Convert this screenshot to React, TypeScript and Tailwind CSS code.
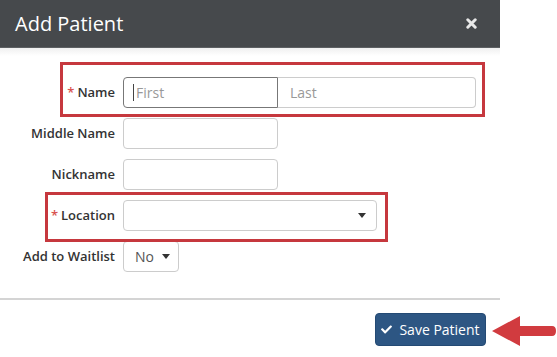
import { FaCheck } from 'react-icons/fa';

const labelCls = 'text-right text-[13px] font-semibold text-[#333] leading-[31px] whitespace-nowrap';
const inputBase =
  'h-[31px] rounded-[4px] border bg-white px-3 text-[14px] text-[#555] placeholder:text-[#999] focus:outline-none';
const inputCls = `${inputBase} border-[#ccc]`;

function Caret() {
  return (
    <svg width="8" height="5" viewBox="0 0 8 5" className="fill-[#333]">
      <path d="M0 0h8L4 5z" />
    </svg>
  );
}

export default function App() {
  return (
    <div className="relative w-[557px] h-[357px] bg-white overflow-hidden" style={{ fontFamily: '"Open Sans", "Liberation Sans", sans-serif' }}>
      <div className="w-[500px] h-full flex flex-col">
        <div className="h-[48px] shrink-0 bg-[#46494c] border-b border-[#5d6063] flex items-center justify-between pl-[15px] pr-[23px]">
          <h2 className="text-[20px] text-white leading-none">Add Patient</h2>
          <svg width="11" height="11" viewBox="0 0 11 11" className="stroke-[#e8e8e8]">
            <path d="M1.8 1.8L9.2 9.2M9.2 1.8L1.8 9.2" strokeWidth="3" strokeLinecap="round" />
          </svg>
        </div>
        <div className="h-[8px] bg-gradient-to-b from-[#f0f0f0] to-white" />
        <div className="grid grid-cols-[115px_auto] gap-x-[8px] gap-y-[10px] pt-[21px] pb-[26px] items-center">
          <label className={labelCls}>
            <span className="text-[#d9534f] mr-[3px]">*</span>Name
          </label>
          <div className="flex w-[353px]">
            <div className={`${inputBase} border-[#777] w-[155px] rounded-r-none flex items-center pl-[9px]`}>
              <span className="w-px h-[17px] bg-[#444] mr-[2px]" />
              <span className="text-[#999]">First</span>
            </div>
            <input className={`${inputCls} flex-1 min-w-0 rounded-l-none border-l-0`} placeholder="Last" />
          </div>
          <label className={labelCls}>Middle Name</label>
          <input className={`${inputCls} w-[155px]`} />
          <label className={labelCls}>Nickname</label>
          <input className={`${inputCls} w-[155px]`} />
          <label className={labelCls}>
            <span className="text-[#d9534f] mr-[3px]">*</span>Location
          </label>
          <div className={`${inputCls} w-[254px] flex items-center justify-end pr-[10px]`}>
            <Caret />
          </div>
          <label className={labelCls}>Add to Waitlist</label>
          <div className={`${inputCls} w-[56px] flex items-center justify-between pl-[11px] pr-[8px]`}>
            <span>No</span>
            <Caret />
          </div>
        </div>
        <div className="h-[2px] bg-[#d4d4d4]" />
        <div className="flex justify-end pt-[13px] pr-[14px]">
          <button className="h-[33px] w-[111px] rounded-[4px] bg-[#2d5683] border border-[#244a74] text-white text-[14px] flex items-center justify-center gap-[7px]">
            <FaCheck className="w-[11px] h-[11px]" />
            Save Patient
          </button>
        </div>
      </div>

      {/* annotation boxes */}
      <div className="absolute left-[60px] top-[62px] w-[425px] h-[55px] border-[3px] border-[#c6383e]" />
      <div className="absolute left-[45px] top-[192px] w-[343px] h-[50px] border-[3px] border-[#c6383e]" />
      <svg className="absolute left-[492px] top-[316px]" width="65" height="30" viewBox="0 0 65 30">
        <path d="M0 15 L28 0 L28 10 L60 10 Q64 10 64 15 Q64 20 60 20 L28 20 L28 30 Z" fill="#d13b3f" />
      </svg>
    </div>
  );
}
